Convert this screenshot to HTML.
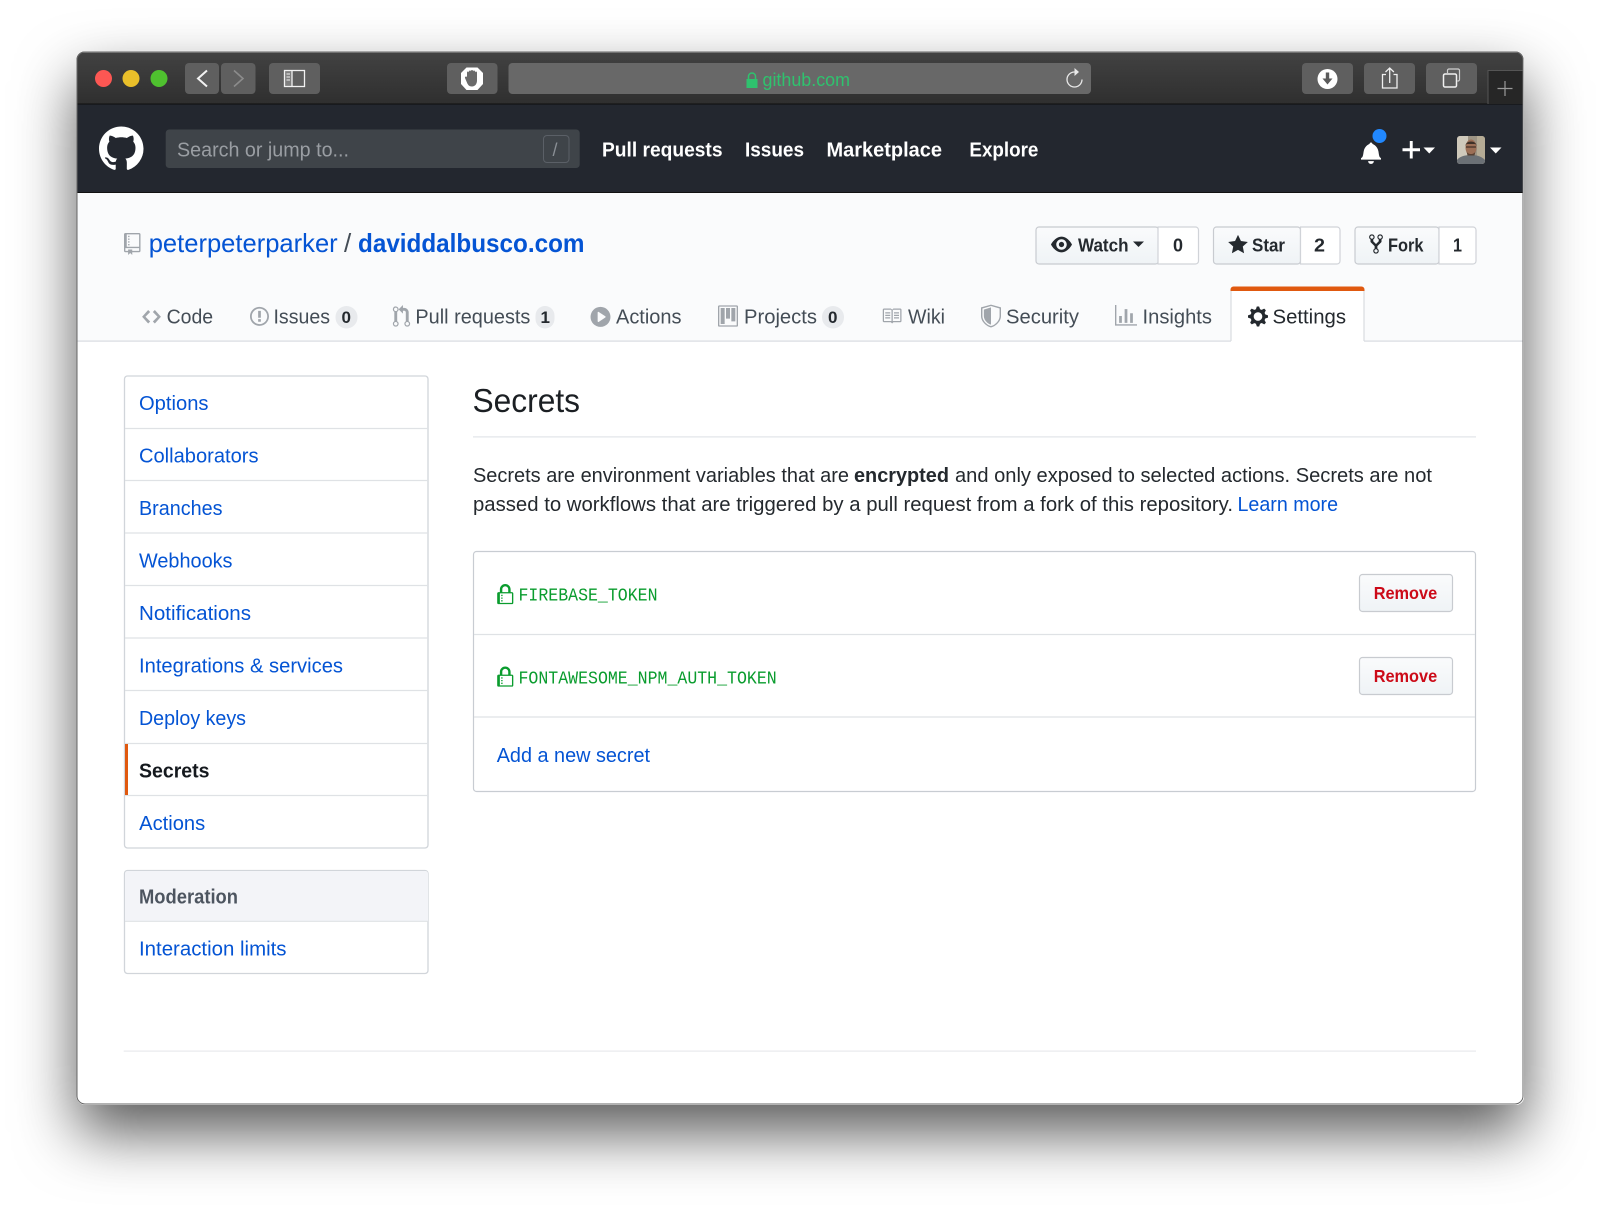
<!DOCTYPE html>
<html lang="en">
<head>
<meta charset="utf-8">
<title>Secrets</title>
<style>
html,body{margin:0;padding:0;background:#fff;width:1600px;height:1205px;overflow:hidden}
#win{position:absolute;left:76.5px;top:51.5px;width:1447px;height:1053px;border-radius:8px;background:#fff;box-shadow:0 28px 60px rgba(0,0,0,.65)}
svg#s{position:absolute;left:0;top:0}
text{font-family:"Liberation Sans",Arial,sans-serif;font-size:20px;fill:#24292e}
.l{fill:#0454d4}
.b{font-weight:bold}
.n{font-weight:bold;fill:#fff}
.tb{fill:#444d56}
.ic{fill:#a0a5ab;fill-rule:evenodd}
.rem{font-weight:bold;font-size:17.5px;fill:#cc0a18}
.btn{font-weight:bold;font-size:18px;fill:#24292e}
.m{font-family:"Liberation Mono",monospace;font-size:18px;fill:#0a9c2e}
path{fill-rule:evenodd}
</style>
</head>
<body>
<div id="win"></div>
<svg id="s" width="1600" height="1205" viewBox="0 0 1600 1205" xmlns="http://www.w3.org/2000/svg">
<defs>
<linearGradient id="chrome" x1="0" y1="0" x2="0" y2="1"><stop offset="0" stop-color="#424242"/><stop offset="1" stop-color="#2f2f2f"/></linearGradient>
<linearGradient id="bt" x1="0" y1="0" x2="0" y2="1"><stop offset="0" stop-color="#fafbfc"/><stop offset="1" stop-color="#eff3f6"/></linearGradient>
<clipPath id="wc"><rect x="76.5" y="51.5" width="1447" height="1053" rx="8"/></clipPath>
<clipPath id="av"><rect x="1457" y="136" width="28" height="28" rx="3"/></clipPath>
</defs>
<g clip-path="url(#wc)">
<rect x="76.5" y="51.5" width="1447" height="1053" fill="#fff"/>
<!-- browser chrome -->
<rect x="76.5" y="51.5" width="1447" height="52.5" fill="url(#chrome)"/>
<rect x="76.5" y="51.5" width="1447" height="1.4" fill="#8c8c8c"/>
<rect x="76.5" y="103.5" width="1447" height="1.2" fill="#0e0e0e"/>
<!-- nav -->
<rect x="76.5" y="104.5" width="1447" height="88" fill="#23272f"/>
<rect x="76.5" y="192" width="1447" height="1" fill="#111"/>
<!-- repo head -->
<rect x="76.5" y="193" width="1447" height="148" fill="#fafbfc"/>
<rect x="76.5" y="340.5" width="1447" height="1.2" fill="#d8dbe0"/>
<!-- new-tab box -->
<rect x="1488" y="70" width="36" height="34" fill="#262626"/>
<path d="M1488 104V70.5H1524" fill="none" stroke="#555" stroke-width="1"/>
<path d="M1505 81v15M1497.5 88.500h15" stroke="#9a9a9a" stroke-width="1.2" fill="none"/>
</g>
<rect x="77" y="52" width="1446" height="1052" rx="8" fill="none" stroke="#666" stroke-width="1"/>

<!-- traffic lights -->
<circle cx="103.500" cy="78.500" r="8.500" fill="#fc5753"/>
<circle cx="131" cy="78.500" r="8.500" fill="#e9bf2a"/>
<circle cx="159" cy="78.500" r="8.500" fill="#4fc12f"/>

<!-- chrome buttons -->
<rect x="185" y="63" width="34" height="31" rx="4" fill="#5f5f5f"/>
<rect x="221" y="63" width="34.500" height="31" rx="4" fill="#5f5f5f"/>
<path d="M207 70.500L198 78.500L207 86.500" fill="none" stroke="#f2f2f2" stroke-width="2"/>
<path d="M234 70.500L243 78.500L234 86.500" fill="none" stroke="#8c8c8c" stroke-width="1.600"/>
<rect x="269" y="63" width="51" height="31" rx="4" fill="#5f5f5f"/>
<rect x="284.500" y="70.500" width="20" height="16" fill="none" stroke="#f2f2f2" stroke-width="1.300"/>
<rect x="285" y="71" width="7" height="15" fill="#bdbdbd" opacity=".35"/>
<path d="M292 70.500v16" stroke="#f2f2f2" stroke-width="1.300"/>
<path d="M286.500 74h3.500M286.500 77h3.500M286.500 80h3.500" stroke="#f2f2f2" stroke-width="1"/>
<rect x="447" y="63" width="50.500" height="31" rx="4" fill="#5f5f5f"/>
<polygon points="466.500,67.500 477.500,67.500 483,73 483,84 477.500,90 466.500,90 461,84 461,73" fill="#fff"/>
<path d="M467 76.500v-4a1 1 0 0 1 2 0v-1a1 1 0 0 1 2 0v-.5a1 1 0 0 1 2 0v.5a1 1 0 0 1 2 0v1a1 1 0 0 1 2 0v8c0 3.500-2 6-5 6-3.500 0-4.500-2.500-5.500-5l-1.500-3.500c-.5-1.500 1.500-2 2-1z" fill="#6a6a6a"/>
<rect x="508.500" y="63" width="582.500" height="31" rx="4" fill="#686868"/>
<path d="M746.500 79h11v9h-11z" fill="#2fc26e"/>
<path d="M748.500 79v-2.500a3.500 3.500 0 0 1 7 0V79" fill="none" stroke="#2fc26e" stroke-width="1.500"/>
<text x="762.500" y="86" textLength="87.500" lengthAdjust="spacingAndGlyphs" style="font-size:18.500px;fill:#2fc26e">github.com</text>
<path d="M1082 79.500a7.500 7.500 0 1 1-7.500-7.500" fill="none" stroke="#e8e8e8" stroke-width="1.300"/>
<path d="M1074.500 68l4.500 4-4.500 4z" fill="#e8e8e8"/>
<rect x="1302" y="63" width="51" height="31" rx="4" fill="#5f5f5f"/>
<rect x="1364" y="63" width="51" height="31" rx="4" fill="#5f5f5f"/>
<rect x="1426" y="63" width="51" height="31" rx="4" fill="#5f5f5f"/>
<circle cx="1327.500" cy="79" r="10" fill="#fff"/>
<path d="M1325.800 72.500h3.400v6h3.300l-5 6-5-6h3.300z" fill="#5a5a5a"/>
<path d="M1386 74.500h-3.500v13.500h14.500V74.500h-3.500" fill="none" stroke="#f0f0f0" stroke-width="1.300"/>
<path d="M1389.700 83V68.500M1385.500 72l4.200-4 4.200 4" fill="none" stroke="#f0f0f0" stroke-width="1.300"/>
<rect x="1443.500" y="74" width="13" height="13" rx="1.500" fill="none" stroke="#f0f0f0" stroke-width="1.500"/>
<path d="M1447.500 73v-2.500a1.500 1.500 0 0 1 1.500-1.500h9a1.500 1.500 0 0 1 1.500 1.500v9a1.500 1.500 0 0 1-1.500 1.500H1457.500" fill="none" stroke="#cfcfcf" stroke-width="1.200"/>

<!-- nav content -->
<svg x="99" y="126.500" width="44.500" height="44.500" viewBox="0 0 16 16"><path fill="#fff" d="M8 0C3.580 0 0 3.580 0 8c0 3.540 2.290 6.530 5.470 7.590.4.070.55-.17.55-.38 0-.19-.01-.82-.01-1.490-2.010.37-2.530-.49-2.690-.94-.09-.23-.48-.94-.82-1.130-.28-.15-.68-.52-.01-.53.630-.01 1.080.58 1.230.82.720 1.210 1.870.87 2.330.66.070-.52.280-.87.510-1.070-1.780-.2-3.640-.89-3.640-3.950 0-.87.310-1.590.820-2.150-.08-.2-.36-1.020.08-2.120 0 0 .67-.21 2.200.82.640-.18 1.320-.27 2-.27.680 0 1.360.09 2 .27 1.530-1.040 2.200-.82 2.200-.82.440 1.100.160 1.920.080 2.120.510.56.820 1.270.820 2.150 0 3.070-1.870 3.750-3.650 3.950.290.25.540.73.540 1.480 0 1.070-.01 1.930-.01 2.200 0 .21.150.46.550.38A8.013 8.013 0 0016 8c0-4.420-3.580-8-8-8z"/></svg>
<rect x="165.700" y="129.500" width="414" height="38.500" rx="3.500" fill="#3f4449"/>
<text x="177" y="156.700" textLength="172" lengthAdjust="spacingAndGlyphs" style="fill:#9a9ea3">Search or jump to...</text>
<rect x="543.500" y="135.500" width="25.500" height="27" rx="3.500" fill="none" stroke="#5b6067" stroke-width="1"/>
<text x="552.500" y="156" style="font-size:18px;fill:#8a8f95">/</text>
<text class="n" x="602" y="156.700" textLength="120.500" lengthAdjust="spacingAndGlyphs">Pull requests</text>
<text class="n" x="745" y="156.700" textLength="59" lengthAdjust="spacingAndGlyphs">Issues</text>
<text class="n" x="826.500" y="156.700" textLength="115.500" lengthAdjust="spacingAndGlyphs">Marketplace</text>
<text class="n" x="969.400" y="156.700" textLength="69" lengthAdjust="spacingAndGlyphs">Explore</text>
<svg x="1361" y="141" width="20" height="23" viewBox="0 0 14 16"><path fill="#fff" d="M14 12v1H0v-1l.730-.58c.770-.77.810-2.550 1.190-4.420C2.690 3.230 6 2 6 2c0-.55.450-1 1-1s1 .45 1 1c0 0 3.390 1.230 4.160 5 .380 1.880.420 3.660 1.190 4.420l.660.58H14zm-7 4c1.110 0 2-.89 2-2H5c0 1.110.890 2 2 2z"/></svg>
<circle cx="1379.500" cy="136" r="7" fill="#2188ff"/>
<svg x="1402.500" y="138" width="17.500" height="23.500" viewBox="0 0 12 16"><path fill="#fff" d="M12 9H7v5H5V9H0V7h5V2h2v5h5v2z"/></svg>
<path d="M1423.500 147.500h11.500l-5.750 6z" fill="#fff"/>
<g clip-path="url(#av)">
<rect x="1457" y="136" width="28" height="28" fill="#9d9484"/>
<rect x="1457" y="136" width="11" height="28" fill="#cfc9bb"/>
<rect x="1477" y="136" width="8" height="28" fill="#b5ab95"/>
<path d="M1457 164v-4c2-3 7-5 14-5s11 2 14 5v4z" fill="#6b7075"/>
<ellipse cx="1471" cy="147.500" rx="5.500" ry="8" fill="#9c6f56"/>
<path d="M1465.500 146c0-6 11-6 11 0l-1-2h-9z" fill="#3f3128"/>
<path d="M1466.500 151c1 4 8 4 9 0l-1 4.500h-7z" fill="#5a4234"/>
<path d="M1466 147h10" stroke="#2e221c" stroke-width="1"/>
</g>
<path d="M1490 147.500h11.500l-5.750 6z" fill="#fff"/>

<!-- repo title -->
<svg x="124" y="233" width="16.500" height="22" viewBox="0 0 12 16"><path class="ic" d="M4 9H3V8h1v1zm0-3H3v1h1V6zm0-2H3v1h1V4zm0-2H3v1h1V2zm8-1v12c0 .550-.450 1-1 1H6v2l-1.500-1.500L3 16v-2H1c-.550 0-1-.450-1-1V1c0-.550.450-1 1-1h10c.550 0 1 .450 1 1zm-1 10H1v2h2v-1h3v1h5v-2zm0-10H2v9h9V1z"/></svg>
<text class="l" x="148.700" y="252" textLength="189" lengthAdjust="spacingAndGlyphs" style="font-size:26px">peterpeterparker</text>
<text x="344" y="252" style="font-size:26px;fill:#444d56">/</text>
<text class="l b" x="358" y="252" textLength="226.500" lengthAdjust="spacingAndGlyphs" style="font-size:26px">daviddalbusco.com</text>

<!-- repo buttons -->
<rect x="1036" y="227" width="122.500" height="37" rx="3" fill="url(#bt)" stroke="#c8cbd0" stroke-width="1.200"/>
<path d="M1158 227h37.500a3 3 0 0 1 3 3v31a3 3 0 0 1-3 3H1158z" fill="#fff" stroke="#d0d3d8" stroke-width="1.200"/>
<rect x="1213.500" y="227" width="87" height="37" rx="3" fill="url(#bt)" stroke="#c8cbd0" stroke-width="1.200"/>
<path d="M1300.500 227h36.500a3 3 0 0 1 3 3v31a3 3 0 0 1-3 3h-36.500z" fill="#fff" stroke="#d0d3d8" stroke-width="1.200"/>
<rect x="1355" y="227" width="84" height="37" rx="3" fill="url(#bt)" stroke="#c8cbd0" stroke-width="1.200"/>
<path d="M1439 227h34a3 3 0 0 1 3 3v31a3 3 0 0 1-3 3h-34z" fill="#fff" stroke="#d0d3d8" stroke-width="1.200"/>
<svg x="1051" y="234" width="21" height="21" viewBox="0 0 16 16"><path fill="#24292e" d="M8.060 2C3 2 0 8 0 8s3 6 8.060 6C13 14 16 8 16 8s-3-6-7.940-6zM8 12c-2.200 0-4-1.780-4-4 0-2.200 1.800-4 4-4 2.220 0 4 1.800 4 4 0 2.220-1.780 4-4 4zm2-4c0 1.110-.890 2-2 2-1.110 0-2-.890-2-2 0-1.110.890-2 2-2 1.110 0 2 .890 2 2z"/></svg>
<text class="btn" x="1078" y="251.700" textLength="50.500" lengthAdjust="spacingAndGlyphs">Watch</text>
<path d="M1133 241.500h11l-5.500 5.500z" fill="#24292e"/>
<text class="btn" x="1173" y="251.700" textLength="10" lengthAdjust="spacingAndGlyphs">0</text>
<svg x="1228" y="233.500" width="20" height="22.500" viewBox="0 0 14 16"><path fill="#24292e" d="M14 6l-4.900-.64L7 1 4.900 5.360 0 6l3.600 3.260L2.670 14 7 11.670 11.330 14l-.93-4.740L14 6z"/></svg>
<text class="btn" x="1252" y="251.700" textLength="33" lengthAdjust="spacingAndGlyphs">Star</text>
<text class="btn" x="1314" y="251.700" textLength="11" lengthAdjust="spacingAndGlyphs">2</text>
<svg x="1369" y="233" width="14" height="22" viewBox="0 0 10 16"><path fill="#24292e" d="M8 1a1.993 1.993 0 00-1 3.720V6L5 8 3 6V4.720A1.993 1.993 0 002 1a1.993 1.993 0 00-1 3.720V6.500l3 3v1.780A1.993 1.993 0 005 15a1.993 1.993 0 001-3.720V9.500l3-3V4.720A1.993 1.993 0 008 1zM2 4.200C1.340 4.200.800 3.650.800 3c0-.650.550-1.200 1.200-1.200.650 0 1.200.550 1.200 1.200 0 .650-.550 1.200-1.200 1.200zm3 10c-.660 0-1.200-.550-1.200-1.200 0-.650.550-1.200 1.200-1.200.650 0 1.200.550 1.200 1.200 0 .650-.550 1.200-1.200 1.200zm3-10c-.660 0-1.200-.550-1.200-1.200 0-.650.550-1.200 1.200-1.200.650 0 1.200.550 1.200 1.200 0 .650-.550 1.200-1.200 1.200z"/></svg>
<text class="btn" x="1388" y="251.700" textLength="35.500" lengthAdjust="spacingAndGlyphs">Fork</text>
<text class="btn" x="1453" y="251.700" textLength="9" lengthAdjust="spacingAndGlyphs">1</text>

<!-- tabs -->
<svg x="142" y="306" width="19" height="21.500" viewBox="0 0 14 16"><path class="ic" d="M9.500 3L8 4.500 11.500 8 8 11.500 9.500 13 14 8 9.500 3zm-5 0L0 8l4.500 5L6 11.500 2.500 8 6 4.500 4.500 3z"/></svg>
<text class="tb" x="166.600" y="323.500" textLength="46.500" lengthAdjust="spacingAndGlyphs">Code</text>
<svg x="250" y="305.500" width="19" height="21.700" viewBox="0 0 14 16"><path class="ic" d="M7 2.300c3.140 0 5.700 2.560 5.700 5.700s-2.560 5.700-5.700 5.700A5.710 5.710 0 011.300 8c0-3.140 2.560-5.700 5.700-5.700zM7 1C3.140 1 0 4.140 0 8s3.140 7 7 7 7-3.140 7-7-3.140-7-7-7zm1 3H6v5h2V4zm0 6H6v2H8v-2z"/></svg>
<text class="tb" x="273.500" y="323.500" textLength="56.500" lengthAdjust="spacingAndGlyphs">Issues</text>
<rect x="335.500" y="306" width="22" height="22.500" rx="11" fill="#e8eaed"/>
<text class="b" x="341.500" y="323" style="font-size:17px">0</text>
<svg x="392.500" y="305" width="18" height="23" viewBox="0 0 12 16"><path class="ic" d="M11 11.280V5c-.030-.780-.340-1.470-.940-2.060C9.460 2.350 8.780 2.030 8 2H7V0L4 3l3 3V4h1c.270.020.480.110.690.310.210.200.300.420.310.690v6.280A1.993 1.993 0 0010 15a1.993 1.993 0 001-3.720zm-1 2.920c-.660 0-1.200-.550-1.200-1.200 0-.650.550-1.200 1.200-1.200.650 0 1.200.550 1.200 1.200 0 .650-.550 1.200-1.200 1.200zM4 3c0-1.110-.890-2-2-2a1.993 1.993 0 00-1 3.720v6.560A1.993 1.993 0 002 15a1.993 1.993 0 001-3.720V4.720c.590-.340 1-.980 1-1.720zm-.800 10c0 .660-.550 1.200-1.200 1.200-.650 0-1.200-.550-1.200-1.200 0-.650.550-1.200 1.200-1.200.650 0 1.200.550 1.200 1.200zM2 4.200C1.340 4.200.800 3.650.800 3c0-.650.550-1.200 1.200-1.200.650 0 1.200.550 1.200 1.200 0 .650-.550 1.200-1.200 1.200z"/></svg>
<text class="tb" x="415.400" y="323.500" textLength="115" lengthAdjust="spacingAndGlyphs">Pull requests</text>
<rect x="535.500" y="306" width="19" height="22.500" rx="9.500" fill="#e8eaed"/>
<text class="b" x="540.500" y="323" style="font-size:17px">1</text>
<svg x="590.500" y="305.500" width="20" height="22.800" viewBox="0 0 14 16"><path class="ic" d="M14 8A7 7 0 110 8a7 7 0 0114 0zm-8.223 3.482l4.599-3.066a.5.5 0 000-.832L5.777 4.518A.5.5 0 005 4.934v6.132a.5.5 0 00.777.416z"/></svg>
<text class="tb" x="616" y="323.500" textLength="65.500" lengthAdjust="spacingAndGlyphs">Actions</text>
<svg x="718" y="305" width="20" height="22" viewBox="0 0 15 16"><path class="ic" d="M10 12h3V2h-3v10zm-4-2h3V2H6v8zm-4 4h3V2H2v12zm-1 1h13V1H1v14zM14 0H1a1 1 0 00-1 1v14a1 1 0 001 1h13a1 1 0 001-1V1a1 1 0 00-1-1z"/></svg>
<text class="tb" x="744" y="323.500" textLength="73" lengthAdjust="spacingAndGlyphs">Projects</text>
<rect x="822" y="306" width="22" height="22.500" rx="11" fill="#e8eaed"/>
<text class="b" x="828" y="323" style="font-size:17px">0</text>
<svg x="881.500" y="305" width="20" height="22" viewBox="0 0 16 16"><path class="ic" d="M3 5h4v1H3V5zm0 3h4V7H3v1zm0 2h4V9H3v1zm11-5h-4v1h4V5zm0 2h-4v1h4V7zm0 2h-4v1h4V9zm2-6v9c0 .550-.450 1-1 1H9.500l-1 1-1-1H2c-.550 0-1-.450-1-1V3c0-.550.450-1 1-1h5.500l1 1 1-1H15c.550 0 1 .450 1 1zm-8 .5L7.500 3H2v9h6V3.500zm7-.5H9.500l-.5.500V12h6V3z"/></svg>
<text class="tb" x="908" y="323.500" textLength="37" lengthAdjust="spacingAndGlyphs">Wiki</text>
<svg x="981" y="304.500" width="20" height="23" viewBox="0 0 14 16"><path class="ic" d="M0 2l7-2 7 2v6.020C14 12.690 8.690 16 7 16c-1.690 0-7-3.310-7-7.980V2zm1 .75L7 1l6 1.750v5.268C13 12.104 8.449 15 7 15c-1.449 0-6-2.896-6-6.982V2.750zm1 .75L7 2v12c-1.207 0-5-2.482-5-5.985V3.500z"/></svg>
<text class="tb" x="1006" y="323.500" textLength="73" lengthAdjust="spacingAndGlyphs">Security</text>
<svg x="1115" y="305" width="22" height="22" viewBox="0 0 16 16"><path class="ic" d="M16 14v1H0V0h1v14h15zM5 13H3V8h2v5zm4 0H7V3h2v10zm4 0h-2V6h2v7z"/></svg>
<text class="tb" x="1142.500" y="323.500" textLength="69.500" lengthAdjust="spacingAndGlyphs">Insights</text>
<path d="M1231 342V291h133v51z" fill="#fff"/>
<path d="M1231 341V291M1364 291v50" stroke="#d8dbe0" stroke-width="1.200" fill="none"/>
<path d="M1230.500 291v-1.500a3 3 0 0 1 3-3h128a3 3 0 0 1 3 3V291z" fill="#e0590f"/>
<svg x="1248" y="305" width="20" height="23" viewBox="0 0 14 16"><path fill="#24292e" d="M14 8.770v-1.600l-1.940-.640-.450-1.090.880-1.840-1.130-1.130-1.810.910-1.090-.450-.690-1.920h-1.600l-.630 1.940-1.110.450-1.840-.880-1.130 1.130.910 1.810-.450 1.090L0 7.230v1.590l1.940.640.450 1.090-.880 1.840 1.130 1.130 1.810-.910 1.090.450.690 1.920h1.590l.630-1.940 1.110-.450 1.840.880 1.130-1.130-.920-1.810.470-1.090L14 8.750v.020zM7 11c-1.660 0-3-1.340-3-3s1.340-3 3-3 3 1.340 3 3-1.340 3-3 3z"/></svg>
<text x="1272.500" y="323.500" textLength="73.500" lengthAdjust="spacingAndGlyphs">Settings</text>

<!-- sidebar -->
<rect x="124.500" y="376" width="303.500" height="472" rx="3" fill="#fff" stroke="#d1d5da" stroke-width="1.300"/>
<path d="M125 428.500h303M125 480.500h303M125 533h303M125 585.500h303M125 638h303M125 690.500h303M125 743.500h303M125 795.500h303" stroke="#dfe2e5" stroke-width="1.200" fill="none"/>
<rect x="125" y="744" width="3" height="51" fill="#e0590f"/>
<text class="l" x="139" y="410" textLength="69.500" lengthAdjust="spacingAndGlyphs">Options</text>
<text class="l" x="139" y="462.500" textLength="119.500" lengthAdjust="spacingAndGlyphs">Collaborators</text>
<text class="l" x="139" y="515" textLength="83.500" lengthAdjust="spacingAndGlyphs">Branches</text>
<text class="l" x="139" y="567.500" textLength="93.500" lengthAdjust="spacingAndGlyphs">Webhooks</text>
<text class="l" x="139" y="620" textLength="112" lengthAdjust="spacingAndGlyphs">Notifications</text>
<text class="l" x="139" y="672.500" textLength="204" lengthAdjust="spacingAndGlyphs">Integrations &amp; services</text>
<text class="l" x="139" y="725" textLength="107" lengthAdjust="spacingAndGlyphs">Deploy keys</text>
<text class="b" x="139" y="777.300" textLength="70.500" lengthAdjust="spacingAndGlyphs" style="fill:#15191e">Secrets</text>
<text class="l" x="139.200" y="830" textLength="66" lengthAdjust="spacingAndGlyphs">Actions</text>
<rect x="124.500" y="870.500" width="303.500" height="103" rx="3" fill="#fff" stroke="#d1d5da" stroke-width="1.300"/>
<path d="M125 921V873.500a2.500 2.500 0 0 1 2.500-2.500h298a2.500 2.500 0 0 1 2.500 2.500V921z" fill="#f3f4f8"/>
<path d="M125 921.300h303" stroke="#dfe2e5" stroke-width="1.200"/>
<text class="b" x="139" y="903.300" textLength="99" lengthAdjust="spacingAndGlyphs" style="fill:#4d5560">Moderation</text>
<text class="l" x="139" y="955.300" textLength="147.500" lengthAdjust="spacingAndGlyphs">Interaction limits</text>

<!-- main -->
<text x="472.500" y="412" textLength="107.500" lengthAdjust="spacingAndGlyphs" style="font-size:33px;fill:#1b1f23">Secrets</text>
<rect x="473" y="436.300" width="1003" height="1.200" fill="#e1e4e8"/>
<text x="473" y="482" textLength="376" lengthAdjust="spacingAndGlyphs">Secrets are environment variables that are</text>
<text class="b" x="854" y="482" textLength="95" lengthAdjust="spacingAndGlyphs">encrypted</text>
<text x="955" y="482" textLength="477" lengthAdjust="spacingAndGlyphs">and only exposed to selected actions. Secrets are not</text>
<text x="473" y="511" textLength="760" lengthAdjust="spacingAndGlyphs">passed to workflows that are triggered by a pull request from a fork of this repository.</text>
<text class="l" x="1237.500" y="511" textLength="100.500" lengthAdjust="spacingAndGlyphs">Learn more</text>

<rect x="473.500" y="551.500" width="1002" height="240" rx="3" fill="#fff" stroke="#c8ccd2" stroke-width="1.200"/>
<path d="M474 634.500h1001M474 717h1001" stroke="#dfe2e5" stroke-width="1.300"/>
<svg x="497" y="584" width="16.500" height="21.500" viewBox="0 0 12 16"><path fill="#0a9c2e" d="M4 13H3v-1h1v1zm8-6v7c0 .550-.450 1-1 1H1c-.550 0-1-.450-1-1V7c0-.550.450-1 1-1h1V4c0-2.200 1.800-4 4-4s4 1.800 4 4v2h1c.550 0 1 .450 1 1zM3.800 6h4.410V4c0-1.220-.980-2.200-2.200-2.200-1.220 0-2.200.980-2.200 2.200v2H3.800zM11 7H2v7h9V7zM4 8H3v1h1V8zm0 2H3v1h1v-1z"/></svg>
<text class="m" x="518.500" y="600.500" textLength="139" lengthAdjust="spacingAndGlyphs">FIREBASE_TOKEN</text>
<svg x="497" y="666.500" width="16.500" height="21.500" viewBox="0 0 12 16"><path fill="#0a9c2e" d="M4 13H3v-1h1v1zm8-6v7c0 .550-.450 1-1 1H1c-.550 0-1-.450-1-1V7c0-.550.450-1 1-1h1V4c0-2.200 1.800-4 4-4s4 1.800 4 4v2h1c.550 0 1 .450 1 1zM3.800 6h4.410V4c0-1.220-.980-2.200-2.200-2.200-1.220 0-2.200.980-2.200 2.200v2H3.800zM11 7H2v7h9V7zM4 8H3v1h1V8zm0 2H3v1h1v-1z"/></svg>
<text class="m" x="518.500" y="683.500" textLength="258.200" lengthAdjust="spacingAndGlyphs">FONTAWESOME_NPM_AUTH_TOKEN</text>
<rect x="1359.500" y="574.500" width="93" height="37" rx="3" fill="url(#bt)" stroke="#c8cbd0" stroke-width="1.200"/>
<text class="rem" x="1373.700" y="599.200" textLength="63.500" lengthAdjust="spacingAndGlyphs">Remove</text>
<rect x="1359.500" y="657.500" width="93" height="37" rx="3" fill="url(#bt)" stroke="#c8cbd0" stroke-width="1.200"/>
<text class="rem" x="1373.700" y="682" textLength="63.500" lengthAdjust="spacingAndGlyphs">Remove</text>
<text class="l" x="496.700" y="762" textLength="153.300" lengthAdjust="spacingAndGlyphs">Add a new secret</text>

<rect x="123.700" y="1050.500" width="1352.300" height="1.200" fill="#e8eaed"/>
</svg>
</body>
</html>
